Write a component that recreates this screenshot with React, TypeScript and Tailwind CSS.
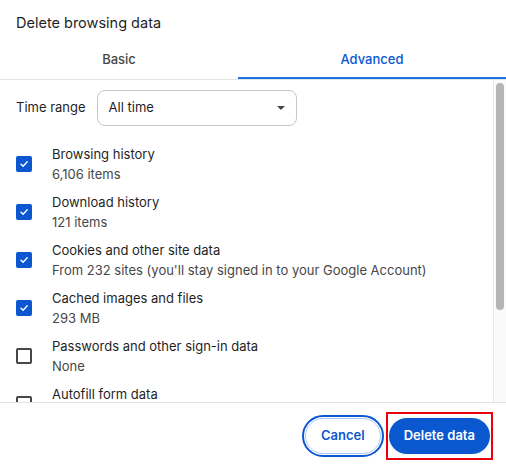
import React from 'react';

type Item = { label: string; detail: string; checked: boolean };

const ITEMS: Item[] = [
  { label: 'Browsing history', detail: '6,106 items', checked: true },
  { label: 'Download history', detail: '121 items', checked: true },
  { label: 'Cookies and other site data', detail: "From 232 sites (you'll stay signed in to your Google Account)", checked: true },
  { label: 'Cached images and files', detail: '293 MB', checked: true },
  { label: 'Passwords and other sign-in data', detail: 'None', checked: false },
  { label: 'Autofill form data', detail: '', checked: false },
];

function Checkbox({ checked }: { checked: boolean }) {
  if (!checked) {
    return <div className="h-4 w-4 shrink-0 rounded-[2px] border-2 border-[#474747]" />;
  }
  return (
    <div className="flex h-4 w-4 shrink-0 items-center justify-center rounded-[2px] bg-[#0b57d0]">
      <svg width="10" height="10" viewBox="0 0 10 10" fill="none">
        <path d="M2 5.2 L4.1 7.2 L8.2 2.8" stroke="white" strokeWidth="1.4" strokeLinecap="round" strokeLinejoin="round" />
      </svg>
    </div>
  );
}

export default function App() {
  return (
    <div
      className="flex h-[470px] w-[506px] flex-col overflow-hidden bg-white text-[#1f1f1f]"
      style={{ fontFamily: 'Inter, "Liberation Sans", sans-serif' }}
    >
      <div className="h-[44px] shrink-0 px-4 pt-[13px] text-[14.5px] leading-[20px]">Delete browsing data</div>

      <div className="flex h-[36px] shrink-0 border-b border-[#e3e3e3] text-[13px] font-medium">
        <div className="flex w-[238px] items-center justify-center pb-[4px] text-[#474747]">Basic</div>
        <div className="relative flex flex-1 items-center justify-center pb-[4px] text-[#0b57d0]">
          Advanced
          <div className="absolute bottom-0 left-0 right-0 h-[2px] bg-[#1a73e8]" />
        </div>
      </div>

      <div className="flex min-h-0 flex-1">
        <div className="min-w-0 flex-1 overflow-hidden">
          <div className="flex items-center gap-[11px] px-4 pt-[10px] text-[13px]">
            <span>Time range</span>
            <div className="flex h-[36px] w-[200px] items-center justify-between rounded-[8px] border border-[#c7c7c7] pl-[11px] pr-[11px]">
              <span>All time</span>
              <svg width="8" height="4" viewBox="0 0 8 4">
                <path d="M0 0 H8 L4 4 Z" fill="#474747" />
              </svg>
            </div>
          </div>

          <div className="pt-[14px]">
            {ITEMS.map((it) => (
              <div key={it.label} className="flex h-[48px] items-center gap-5 px-4">
                <Checkbox checked={it.checked} />
                <div className="text-[13px] leading-[20px]">
                  <div>{it.label}</div>
                  <div className="text-[#474747]">{it.detail || '\u00a0'}</div>
                </div>
              </div>
            ))}
          </div>
        </div>

        <div className="w-[13px] shrink-0 border-l border-[#e8e8e8] bg-[#fafafa] px-[2px] pt-[3px]">
          <div className="h-[227px] rounded-full bg-[#b5b5b5]" />
        </div>
      </div>

      <div className="flex h-[68px] shrink-0 items-center justify-end gap-2 border-t border-[#e3e3e3] pr-4 pb-[2px] text-[13px] font-semibold">
        <button className="h-[36px] rounded-full border border-[#a8c7fa] px-[15px] text-[#0b57d0] outline-2 outline-offset-1 outline-[#0b57d0]">
          Cancel
        </button>
        <button className="relative h-[36px] rounded-full bg-[#0b57d0] px-[15px] text-white">
          Delete data
          <span className="pointer-events-none absolute -inset-x-[3px] -inset-y-[6px] border-2 border-[#e8000b]" />
        </button>
      </div>
    </div>
  );
}
